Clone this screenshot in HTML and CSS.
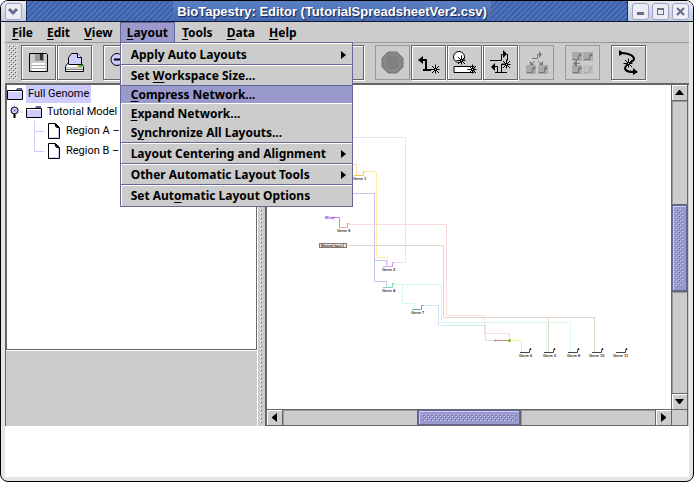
FILE: index.html
```html
<!DOCTYPE html>
<html lang="en">

<head>
    <meta charset="utf-8">
    <meta name="viewport" content="width=device-width, initial-scale=1.0">
    <title>BioTapestry: Editor</title>
    <link rel="stylesheet" href="styles.css">
</head>

<body>
    <div class="window">
        <header class="titlebar">
            <div class="corner">
                <button class="winbtn" aria-label="Window menu"><svg width="15" height="15"><path d="M3 5l4 4 4-4" fill="none" stroke="#626c8c" stroke-width="3"/></svg></button>
            </div>
            <h1 class="title"><span>BioTapestry: Editor (TutorialSpreadsheetVer2.csv)</span></h1>
            <div class="corner corner-right">
                <button class="winbtn" aria-label="Minimize"><svg width="15" height="15"><path d="M4 8h7v3H4z" fill="#626c8c"/></svg></button>
                <button class="winbtn" aria-label="Maximize"><svg width="15" height="15"><path d="M4 4h7v7H4zM5 6v4h5V6z" fill="#626c8c" fill-rule="evenodd"/></svg></button>
                <button class="winbtn" aria-label="Close"><svg width="15" height="15"><path d="M4 4l7 7M11 4l-7 7" stroke="#626c8c" stroke-width="2"/></svg></button>
            </div>
        </header>

        <div class="frame">
            <nav class="menubar">
                <button class="menu"><u>F</u>ile</button>
                <button class="menu"><u>E</u>dit</button>
                <button class="menu"><u>V</u>iew</button>
                <div class="menu-open">
                    <button class="menu valgt"><u>L</u>ayout</button>
                    <div class="popup">
                        <button class="item more">Apply Auto Layouts</button>
                        <hr>
                        <button class="item">Set <u>W</u>orkspace Size...</button>
                        <button class="item active"><u>C</u>ompress Network...</button>
                        <button class="item"><u>E</u>xpand Network...</button>
                        <button class="item">S<u>y</u>nchronize All Layouts...</button>
                        <hr>
                        <button class="item more">Layout Centering and Alignment</button>
                        <hr>
                        <button class="item more">Other Automatic Layout Tools</button>
                        <hr>
                        <button class="item">Set Aut<u>o</u>matic Layout Options</button>
                    </div>
                </div>
                <button class="menu"><u>T</u>ools</button>
                <button class="menu"><u>D</u>ata</button>
                <button class="menu"><u>H</u>elp</button>
            </nav>

            <!-- the star that marks "add" tools -->
            <svg class="defs" width="0" height="0">
                <defs>
                    <g id="star">
                        <path d="M-4.500.5h9M.5-4.500v9M-3-3L4 4M-3 4L4-3" stroke="#000" stroke-width="1"/>
                        <rect width="1" height="1" fill="#ccc"/>
                    </g>
                    <g id="mini">
                        <path d="M0 0h10v9H0z" fill="#aaa"/>
                        <path d="M1 7.500h5.500V3.500H8" fill="none" stroke="#777" stroke-width="1"/>
                        <path d="M7 1l3 2-3 2z" fill="#777"/>
                    </g>
                </defs>
            </svg>

            <div class="toolbar">
                <div class="grip"></div>
                <div class="group">
                    <button class="tool" aria-label="Save"><svg viewBox="0 0 35 35">
                        <path d="M8.500 8.500h17l1 1v17h-18z" fill="#ccc" stroke="#000"/>
                        <path d="M14 9h9v7h-9z" fill="#999"/><path d="M19 9h3v6h-3z" fill="#333"/>
                        <path d="M11 18h13v8H11z" fill="#fff"/><path d="M11 20.500h13M11 23.500h13" stroke="#aaa"/>
                    </svg></button>
                    <button class="tool" aria-label="Print"><svg viewBox="0 0 35 35">
                        <path d="M11.500 19.500v-7l3-4h6l4 4v7z" fill="#ccf" stroke="#000"/><path d="M20.500 8.500v4h4" fill="#fff" stroke="#000"/>
                        <path d="M10.500 18.500l-2 3v5h18v-5l-2-3v1h-12z" fill="#fff" stroke="#000"/>
                        <path d="M9 22h17v2H9z" fill="#ccc"/><path d="M20 20h2v2h-2z" fill="#fd0"/><path d="M22 20h3v2h-3z" fill="#2c2"/><path d="M9 24.500h17" stroke="#888"/>
                    </svg></button>
                </div>
                <div class="group">
                    <button class="tool" aria-label="Zoom out"><svg viewBox="0 0 35 35"><circle cx="14" cy="14.500" r="6" fill="#ccf" stroke="#000"/><path d="M11 14.500h7M19 19l8 8" stroke="#000" stroke-width="2"/></svg></button>
                    <button class="tool" aria-label="Zoom in"></button>
                    <button class="tool" aria-label="Zoom to model"></button>
                    <button class="tool" aria-label="Zoom to selected"></button>
                </div>
                <div class="group">
                    <button class="tool" aria-label="Search"></button>
                    <button class="tool" aria-label="Up"></button>
                    <button class="tool" aria-label="Down"></button>
                </div>
                <div class="group">
                    <button class="tool off" disabled aria-label="Stop"><svg viewBox="0 0 35 35"><path d="M13 7h9l6 6v9l-6 6h-9l-6-6v-9z" fill="#858585" stroke="#777"/><path d="M14 10h7l4 4v7l-4 4h-7l-4-4v-7z" fill="#808080" stroke="#8c8c8c"/></svg></button>
                    <button class="tool" aria-label="Add gene"><svg viewBox="0 0 35 35">
                        <path d="M11 15h4v10M12 25h8" fill="none" stroke="#000" stroke-width="2"/><path d="M7 15l5-4v8z"/><use href="#star" x="24" y="24"/>
                    </svg></button>
                    <button class="tool" aria-label="Add node"><svg viewBox="0 0 35 35">
                        <circle cx="12" cy="12" r="5.500" fill="#fff" stroke="#000"/><path d="M7 21.500h20v6H7z" fill="#fff" stroke="#000"/><use href="#star" x="14" y="15"/><use href="#star" x="25" y="24"/>
                    </svg></button>
                    <button class="tool" aria-label="Add link"><svg viewBox="0 0 35 35">
                        <path d="M7 15.500h11.500V9.500H21M24.500 9v6.500" fill="none" stroke="#000"/><path d="M20 5l4 4-4 4z"/>
                        <path d="M12 21.500h2.500v6M12 27.500h12M18.500 27v-8h5" fill="none" stroke="#000"/><path d="M12 18v8l-4-4z"/><use href="#star" x="23" y="19"/>
                    </svg></button>
                    <button class="tool off" disabled aria-label="Add submodel"><svg viewBox="0 0 35 35">
                        <path d="M13 13.500h5.500v-4H21M16 16l-4 4M19 16l4 4" fill="none" stroke="#777" stroke-width="1"/><path d="M20 6l3 3.500-3 3.500zM11 16v5h5zM24 16v5h-5z" fill="#777"/>
                        <use href="#mini" x="7" y="20"/><use href="#mini" x="19" y="20"/>
                    </svg></button>
                </div>
                <div class="group">
                    <button class="tool off" disabled aria-label="Propagate"><svg viewBox="0 0 35 35">
                        <use href="#mini" x="7" y="7"/><use href="#mini" x="18" y="7"/><use href="#mini" x="7" y="20"/><use href="#mini" x="18" y="20" opacity=".4"/><path d="M9 18.500h6" stroke="#777"/><path d="M12 15v7l-4-3.500z" fill="#777"/>
                    </svg></button>
                </div>
                <div class="group">
                    <button class="tool" aria-label="Relayout link"><svg viewBox="0 0 35 35">
                        <path d="M10 8c8 0 13 3 13 6s-9 5-9 9 5 4 10 4" fill="none" stroke="#000" stroke-width="2"/><path d="M8 5l5 3-5 3zM22 23l5 4-5 3z"/><use href="#star" x="17" y="18"/>
                    </svg></button>
                </div>
            </div>

            <main class="split">
                <aside class="side">
                    <ul class="tree">
                        <li class="row"><svg class="folder" width="16" height="14"><use href="#folder"/></svg><span class="label selected">Full Genome</span></li>
                        <li class="row indent"><svg class="handle" width="16" height="18"><path d="M7.500 0v4M9 9h7" stroke="#ccf"/><path d="M7.500 9v6" stroke="#000" stroke-width="2"/><circle cx="7.500" cy="7.500" r="3.500" fill="#ccf" stroke="#000"/><circle cx="7.500" cy="7.500" r="1" fill="#669"/></svg><svg class="folder" width="16" height="14"><defs><g id="folder"><path d="M.5 3.500H15.500v9H.5z" fill="#ccf" stroke="#000"/><path d="M1 4.500h14" stroke="#fff"/><path d="M10 1h5v2h-6z" fill="#669"/></g></defs><use href="#folder"/></svg><span class="label">Tutorial Model</span></li>
                        <li class="row leaf"><svg class="page" width="14" height="16"><use href="#page"/></svg><span class="label">Region A –</span></li>
                        <li class="row leaf last"><svg class="page" width="14" height="16"><defs><g id="page"><path d="M1.500.5h7l4 4v11h-11z" fill="#fff" stroke="#000"/><path d="M2.500 14.500h9V6" fill="none" stroke="#ccf"/><path d="M8 1l4 4-3-1z" fill="#669" stroke="#000"/></g></defs><use href="#page"/></svg><span class="label">Region B –</span></li>
                    </ul>
                    <div class="note"></div>
                </aside>
                <div class="divider"></div>
                <section class="view">
                    <div class="canvas">
                        <svg class="network" viewBox="267 85 404 324" preserveAspectRatio="xMinYMin">
                            <g fill="none" stroke-width="1">
                                <path d="M350 137.500h55.500v125H393" stroke="#efdff3"/>
                                <path d="M350 164.500h6.500V175" stroke="#ffd9a0"/>
                                <path d="M364 171.500h12.500v86h11V265" stroke="#ffeba6"/>
                                <path d="M350 193.500h24.500v88h12v5M374.500 260.500h12v5" stroke="#c9c3e4"/>
                                <path d="M332 217.500h7.500v10" stroke="#c77ff0"/>
                                <path d="M348 224.500h98.500v91h38v18h25v7" stroke="#fadcda"/>
                                <path d="M347 245.500h96.500v72h151V352M548.500 317.500V352" stroke="#e3d6c8"/>
                                <path d="M393 284.500h48.500v38h129V352M546.500 322.500V352M402.500 284.500v19h12v6" stroke="#d5f8e8"/>
                                <path d="M423 305.500h15.500v20h47v15H495" stroke="#cbe8f0"/>
                                <path d="M495 340.500h14" stroke="#c98f94"/>
                                <path d="M510 340.500h11.500V352" stroke="#dcff8a"/>
                                <path d="M354 175.500h9.500v-4h2" stroke="#f5cc50"/>
                                <path d="M339 227.500h8.500v-4h2" stroke="#e8a8a0"/>
                                <path d="M383 266.500h9.500v-4h2" stroke="#d89af0"/>
                                <path d="M383 287.500h9.500v-4h2" stroke="#80d8b0"/>
                                <path d="M412 309.500h9.500v-4h2" stroke="#60a8b8"/>
                                <path d="M520 352.500h9.500v-3h2M544 352.500h9.500v-3h2M568 352.500h9.500v-3h2M592 352.500h9.500v-3h2M616 352.500h9.500v-3h2" stroke="#444"/>
                            </g>
                            <path d="M530 348h1v2h-1zM554 348h1v2h-1zM578 348h1v2h-1zM602 348h1v2h-1zM626 348h1v2h-1z" fill="#222"/>
                            <circle cx="495" cy="340.500" r="1" fill="#999"/>
                            <circle cx="509.500" cy="340.500" r="1.500" fill="#8ab020"/>
                            <rect x="319.500" y="243.500" width="27" height="4" fill="#f4ece4" stroke="#877"/>
                            <g class="gene">
                                <text x="325" y="219" fill="#a040e0">Mitoj</text>
                                <text class="input" x="321" y="247">Maternal Input 2</text>
                                <text x="353" y="180">Gene 1</text>
                                <text x="337" y="232">Gene 9</text>
                                <text x="382" y="271">Gene 2</text>
                                <text x="382" y="292">Gene 4</text>
                                <text x="411" y="314">Gene 7</text>
                                <text x="519" y="357">Gene 6</text>
                                <text x="543" y="357">Gene 5</text>
                                <text x="567" y="357">Gene 8</text>
                                <text x="589" y="357">Gene 10</text>
                                <text x="613" y="357">Gene 11</text>
                            </g>
                        </svg>
                    </div>
                    <div class="scroll vertical">
                        <button class="arrow" aria-label="Scroll up"><svg width="9" height="5"><path d="M0 5h9L5 0H4z"/></svg></button>
                        <div class="track before"></div>
                        <div class="thumb"></div>
                        <div class="track after"></div>
                        <button class="arrow" aria-label="Scroll down"><svg width="9" height="5"><path d="M0 0h9L5 5H4z"/></svg></button>
                    </div>
                    <div class="scroll horizontal">
                        <button class="arrow" aria-label="Scroll left"><svg width="5" height="9"><path d="M5 0v9L0 5V4z"/></svg></button>
                        <div class="track before"></div>
                        <div class="thumb"></div>
                        <div class="track after"></div>
                        <button class="arrow" aria-label="Scroll right"><svg width="5" height="9"><path d="M0 0v9l5-4V4z"/></svg></button>
                    </div>
                    <div class="square"></div>
                </section>
            </main>
            <footer class="status"></footer>
        </div>
    </div>
</body>

</html>
```
FILE: styles.css
```css
* {
    box-sizing: border-box;
    margin: 0;
    padding: 0;
}

body {
    background-color: white;
    font-family: "Noto Sans", sans-serif;
    font-size: 12px;
}

button {
    font: inherit;
    color: black;
    border: none;
    background: none;
}

svg {
    display: block;
}

.defs {
    position: absolute;
}

.window {
    display: flex;
    flex-direction: column;
    height: 100vh;
    border: 1px solid black;
    border-radius: 8px;
    background-color: #e5e5e5;
    overflow: hidden;
}

/* title bar */
.titlebar {
    display: flex;
    height: 21px;
    border-bottom: 1px solid #101830;
    background-color: #dcdfe9;
}

.corner {
    display: flex;
    align-items: center;
    gap: 3px;
    padding: 0 4px;
    background: linear-gradient(#e8eaf0, #c4cae0);
}

.winbtn {
    width: 17px;
    height: 17px;
    border: 1px solid #9ba4c4;
    border-radius: 3px;
    background-color: #eceef4;
}

.title {
    flex: 1;
    display: flex;
    justify-content: center;
    padding-left: 10px;
    border-left: 1px solid #1c2c60;
    border-right: 1px solid #1c2c60;
    background: repeating-linear-gradient(135deg, #3a5ea6 0 1px, #5074ba 2px 3px, #4468b0 4px);
    font: bold 13px/22px "Liberation Sans", sans-serif;
    color: white;
    text-shadow: 1px 1px 1px #14244c;
    white-space: nowrap;
}

.title span {
    padding: 0 4px;
    background: linear-gradient(#5a80c4, #4468b0);
}

.frame {
    flex: 1;
    display: flex;
    flex-direction: column;
    margin: 0 4px 4px;
    min-height: 0;
}

/* menus */
.menubar {
    display: flex;
    height: 21px;
    background-color: #ccc;
    border-bottom: 1px solid #999;
    font-weight: bold;
}

.menu {
    height: 20px;
    padding: 0 6px;
    line-height: 20px;
    border: 1px solid transparent;
    border-bottom: none;
}

.menu.valgt {
    background-color: #9999cc;
    border-color: #666699;
}

u {
    text-underline-offset: 2px;
    text-decoration-thickness: 1px;
}

.menu-open {
    position: relative;
}

.popup {
    position: absolute;
    z-index: 1;
    left: 0;
    top: 20px;
    width: 233px;
    padding: 2px 0 1px;
    border: 1px solid #666699;
    background-color: #ccc;
    box-shadow: inset 1px 1px white;
}

.popup hr {
    border: none;
    border-top: 1px solid #666699;
    border-bottom: 1px solid white;
}

.item {
    display: flex;
    align-items: center;
    justify-content: space-between;
    width: 100%;
    height: 19px;
    padding: 0 6px 0 10px;
    line-height: 19px;
    font-weight: bold;
    text-align: left;
    white-space: pre;
}

.item:not(.more) {
    justify-content: flex-start;
}

.item.active {
    background-color: #9999cc;
    border-top: 1px solid #666699;
    border-bottom: 1px solid white;
}

.more::after {
    content: "";
    border: 4px solid transparent;
    border-left: 5px solid black;
    border-right: none;
}

/* toolbar */
.toolbar {
    display: flex;
    gap: 11px;
    height: 40px;
    padding: 2px 3px;
    background-color: #ccc;
}

.group {
    display: flex;
    gap: 1px;
}

.tool {
    width: 35px;
    height: 35px;
    border: 1px solid #666;
    box-shadow: inset 1px 1px white, 1px 1px white;
}

.tool svg {
    width: 35px;
    height: 35px;
    margin: -1px;
}

.tool.off {
    border-color: #999;
    box-shadow: none;
}

/* raised dots on the grips */
.grip,
.divider {
    background: #ccc url("data:image/svg+xml,%3Csvg xmlns='http://www.w3.org/2000/svg' width='4' height='4' shape-rendering='crispEdges'%3E%3Cpath d='M0 0h1v1H0zM2 2h1v1H2z' fill='white'/%3E%3Cpath d='M1 1h1v1H1zM3 3h1v1H3z' fill='%23666'/%3E%3C/svg%3E") content-box;
}

.grip {
    width: 9px;
    height: 35px;
    margin-right: -7px;
}

/* tree, divider and network */
.split {
    flex: 1;
    display: flex;
    min-height: 0;
    border-top: 2px solid #666;
    background-color: #ccc;
}

.side {
    display: flex;
    flex-direction: column;
    width: 252px;
    border-left: 1px solid #666;
}

.tree {
    flex: 7;
    border: 1px solid #666;
    border-top: none;
    background-color: white;
    list-style: none;
    font-family: Roboto, sans-serif;
    font-size: 11px;
}

.row {
    display: flex;
    align-items: center;
    gap: 3px;
    height: 18px;
}

.label {
    padding: 0 2px;
    line-height: 18px;
}

.selected {
    background-color: #ccccff;
}

.leaf {
    height: 20px;
    padding-left: 27px;
}

.leaf::before {
    content: "";
    width: 10px;
    height: 20px;
    background: linear-gradient(#ccf, #ccf) left / 1px 100% no-repeat, linear-gradient(#ccf, #ccf) center / 100% 1px no-repeat;
}

.leaf.last::before {
    background-size: 1px 50%, 100% 1px;
    background-position: left top, center;
}

.note {
    flex: 2;
    border-top: 1px solid white;
}

.divider {
    width: 10px;
    padding: 0 3px 2px 2px;
    border-left: 1px solid white;
    border-right: 2px solid #666;
}

.view {
    flex: 1;
    display: grid;
    grid-template-columns: 1fr 16px;
    grid-template-rows: 1fr 16px;
    margin-right: 1px;
    min-width: 0;
    border-right: 1px solid #666;
    border-bottom: 1px solid #666;
}

.canvas {
    min-width: 0;
    min-height: 0;
    overflow: hidden;
    background-color: white;
}

.network {
    width: 100%;
    height: 100%;
}

.gene {
    font: bold 4px "Liberation Sans", sans-serif;
    fill: #333;
}

.input {
    font-size: 3px;
}

.scroll {
    display: flex;
    border: 0 solid #666;
}

.vertical {
    flex-direction: column;
    border-left-width: 1px;
}

.horizontal {
    border-top-width: 1px;
}

.arrow {
    flex: none;
    display: grid;
    place-items: center;
    width: 15px;
    height: 15px;
    box-shadow: inset 1px 1px white;
}

.track {
    border: 1px solid #666;
    box-shadow: inset 1px 1px #999;
}

.vertical .track {
    border-width: 1px 0;
}

.horizontal .track {
    border-width: 0 1px;
}

.before {
    flex: 105;
}

.after {
    flex: 103;
}

.horizontal .before,
.horizontal .after {
    flex: 135;
}

.thumb {
    flex: 80;
    padding: 3px;
    border: 1px solid #666699;
    box-shadow: inset 1px 1px #ccccff;
    background: url("data:image/svg+xml,%3Csvg xmlns='http://www.w3.org/2000/svg' width='4' height='4' shape-rendering='crispEdges'%3E%3Cpath d='M0 0h1v1H0zM2 2h1v1H2z' fill='%23ccf'/%3E%3Cpath d='M1 1h1v1H1zM3 3h1v1H3z' fill='%23669'/%3E%3C/svg%3E") content-box, linear-gradient(#9999cc, #9999cc);
}

.horizontal .thumb {
    flex: 96;
}

.square {
    border: 0 solid #666;
    border-width: 1px 0 0 1px;
}

.status {
    height: 51px;
    background-color: white;
}
```
